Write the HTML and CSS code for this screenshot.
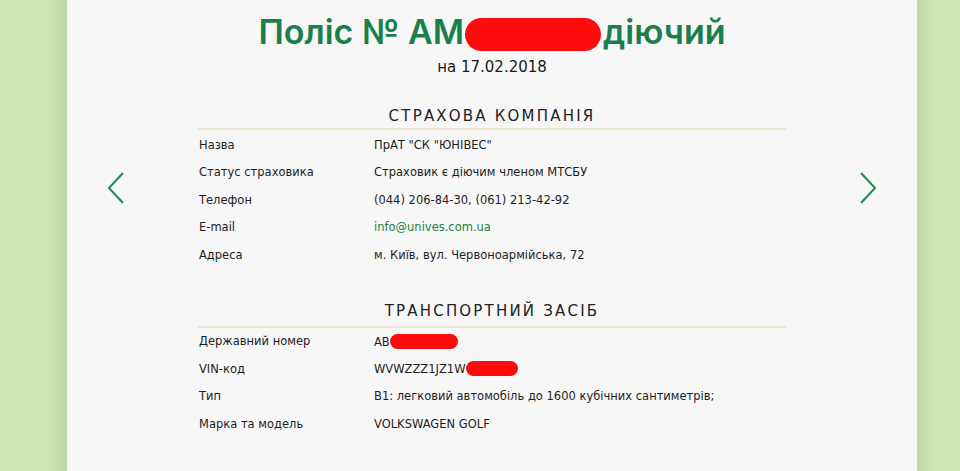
FILE: index.html
```html
<!DOCTYPE html>
<html lang="uk">
<head>
<meta charset="utf-8">
<title>Поліс</title>
<link rel="stylesheet" href="styles.css">
</head>
<body>
<div class="page">
  <main class="panel">
    <button class="nav nav-prev" aria-label="Назад">
      <svg width="18" height="34" viewBox="0 0 18 34"><path d="M16 2 L2 17 L16 32" fill="none" stroke="#1f8a55" stroke-width="2"/></svg>
    </button>
    <div class="content">
      <h1 class="title">Поліс № АМ<span class="mask mask-title"></span>діючий</h1>
      <p class="date">на 17.02.2018</p>

      <section class="section">
        <h2 class="section-title">Страхова компанія</h2>
        <dl class="rows">
          <div class="row"><dt>Назва</dt><dd>ПрАТ "СК "ЮНІВЕС"</dd></div>
          <div class="row"><dt>Статус страховика</dt><dd>Страховик є діючим членом МТСБУ</dd></div>
          <div class="row"><dt>Телефон</dt><dd>(044) 206-84-30, (061) 213-42-92</dd></div>
          <div class="row"><dt>E-mail</dt><dd><a class="link" href="#">info@unives.com.ua</a></dd></div>
          <div class="row"><dt>Адреса</dt><dd>м. Київ, вул. Червоноармійська, 72</dd></div>
        </dl>
      </section>

      <section class="section section-2">
        <h2 class="section-title">Транспортний засіб</h2>
        <dl class="rows">
          <div class="row"><dt>Державний номер</dt><dd>AB<span class="mask mask-plate"></span></dd></div>
          <div class="row"><dt>VIN-код</dt><dd>WVWZZZ1JZ1W<span class="mask mask-vin"></span></dd></div>
          <div class="row"><dt>Тип</dt><dd>B1: легковий автомобіль до 1600 кубічних сантиметрів;</dd></div>
          <div class="row"><dt>Марка та модель</dt><dd>VOLKSWAGEN GOLF</dd></div>
        </dl>
      </section>
    </div>
    <button class="nav nav-next" aria-label="Далі">
      <svg width="18" height="34" viewBox="0 0 18 34"><path d="M2 2 L16 17 L2 32" fill="none" stroke="#1f8a55" stroke-width="2"/></svg>
    </button>
  </main>
</div>
</body>
</html>
```
FILE: styles.css
```css
* { box-sizing: border-box; }
html, body { margin: 0; padding: 0; }
body {
  width: 960px;
  height: 471px;
  overflow: hidden;
  background: #cfe5b6;
  font-family: "DejaVu Sans", "Open Sans", sans-serif;
  color: #1a1a1a;
}
.page {
  display: flex;
  justify-content: center;
  height: 471px;
  background:
    linear-gradient(90deg, #cfe5b6 0, #cfe5b6 48px, #bcd3a3 67px, transparent 67px),
    linear-gradient(270deg, #cfe5b6 0, #cfe5b6 25px, #bfd6a7 43px, transparent 43px),
    #cfe5b6;
}
.panel {
  width: 850px;
  height: 471px;
  margin-left: 24px;
  background: #f7f7f7;
  display: flex;
  align-items: flex-start;
}
.nav {
  border: 0;
  background: none;
  padding: 0;
  margin-top: 171px;
  width: 18px;
  height: 34px;
  cursor: pointer;
}
.nav svg { display: block; }
.nav-prev { margin-left: 40px; }
.nav-next { margin-left: auto; margin-right: 40px; }
.content {
  width: 588px;
  margin-left: 73px;
  text-align: center;
}
.title {
  margin: 12px 0 0;
  font-family: Inter, "DejaVu Sans", sans-serif;
  font-size: 34px;
  line-height: 40px;
  font-weight: 600;
  color: #1b7f4c;
  white-space: nowrap;
}
.mask {
  display: inline-block;
  background: #fe0b0b;
  border-radius: 999px;
  vertical-align: middle;
}
.mask-title { width: 136px; height: 33px; margin: 0 2px 0 1px; vertical-align: -7px; }
.mask-plate { width: 68px; height: 15px; vertical-align: -3px; margin-left: 0; }
.mask-vin { width: 52px; height: 15px; vertical-align: -3px; margin-left: 0; }
.date {
  margin: 5px 0 0;
  font-size: 15px;
  line-height: 20px;
  font-weight: 500;
  color: #1a1a1a;
}
.section { margin-top: 29px; }
.section-2 { margin-top: 32px; }
.section-title {
  margin: 0;
  font-size: 15px;
  line-height: 20px;
  font-weight: 500;
  letter-spacing: 2.2px;
  text-transform: uppercase;
  color: #222;
  padding-bottom: 2px;
  border-bottom: 2px solid #ece6d0;
}
.section-2 .section-title { padding-bottom: 5px; }
.rows {
  margin: 1px 0 0;
  text-align: left;
}
.section-2 .rows { margin-top: 0; }
.row {
  display: flex;
  height: 27.5px;
  align-items: center;
  font-size: 11.5px;
  color: #1d1d1d;
}
.row dt { width: 176px; padding-left: 1px; }
.row dd { margin: 0; white-space: nowrap; }
.link { color: #1b7f46; text-decoration: none; }
```
